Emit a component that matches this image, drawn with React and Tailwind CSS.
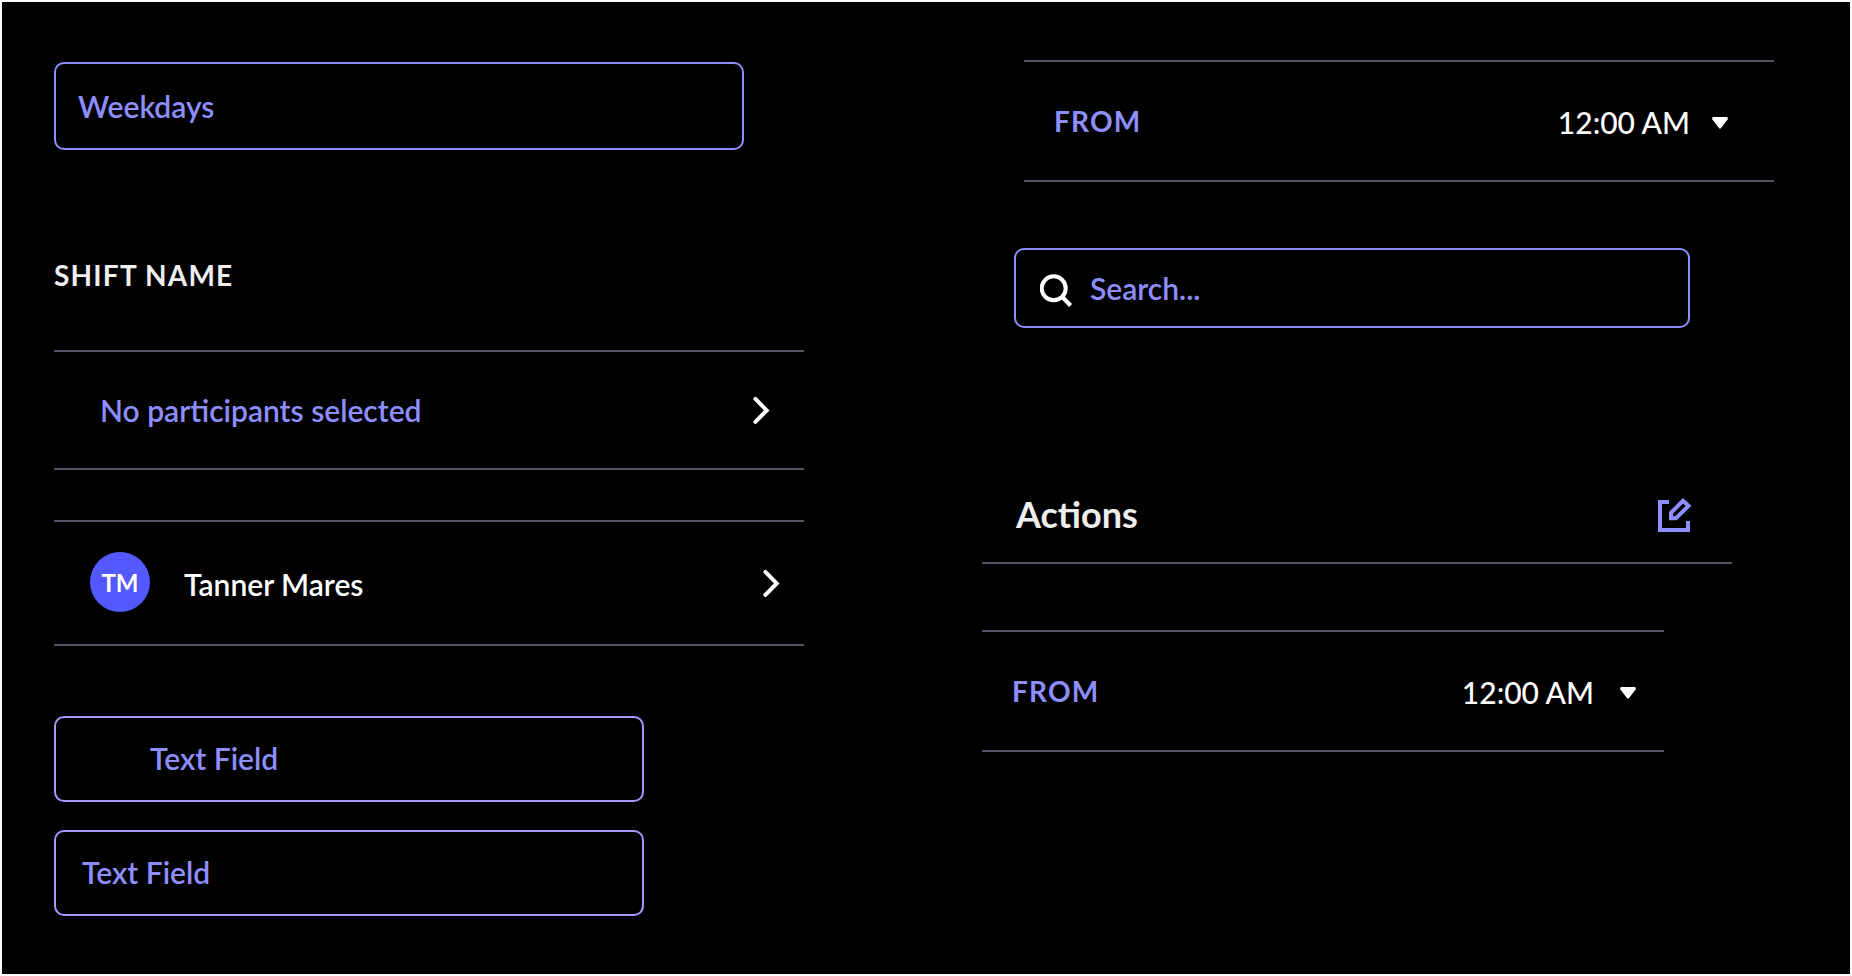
function Chevron() {
  return (
    <svg className="h-7 w-[18px] shrink-0" viewBox="0 0 18 28" fill="none">
      <path d="M2.4 2.9 L13.7 14.4 L2.4 25.9" stroke="#fff" strokeWidth="4" strokeLinecap="round" strokeLinejoin="miter" />
    </svg>
  );
}

function Caret() {
  return (
    <svg className="h-3 w-4 shrink-0" viewBox="0 0 16 12">
      <path d="M1.2 0 H14.8 Q16.4 0.6 15.6 2.4 L9.3 10.7 Q8 12.4 6.7 10.7 L0.4 2.4 Q-0.4 0.6 1.2 0 Z" fill="#fff" />
    </svg>
  );
}

function SearchIcon() {
  return (
    <svg className="h-[34px] w-[34px] shrink-0" viewBox="0 0 34 34" fill="none" stroke="#fff">
      <circle cx="13.7" cy="14.3" r="12" strokeWidth="4" />
      <path d="M22.3 23 L30.6 31.4" strokeWidth="4.2" />
    </svg>
  );
}

function EditIcon() {
  return (
    <svg className="size-[34px] shrink-0" viewBox="0 0 34 34" fill="none" stroke="#8E8EFF" strokeWidth="4">
      <path d="M11 4 H2 V32 H30 V23" />
      <path d="M25 2.8 L30.5 7.8 L17.9 20.3 H13 V14.8 Z" />
    </svg>
  );
}

function Field({ className, children }) {
  return (
    <div className={`flex items-center rounded-[10px] border-2 text-[30px] leading-9 font-semibold text-[#8E8EFF] ${className}`}>
      {children}
    </div>
  );
}

function Row({ className, children }) {
  return <div className={`flex items-center border-y-2 border-[#545466] ${className}`}>{children}</div>;
}

function TimeRow({ className, gap }) {
  return (
    <Row className={`h-[122px] justify-between ${className}`}>
      <span className="text-[28px] leading-[34px] font-bold tracking-[1.2px] text-[#8E8EFF]">FROM</span>
      <span className={`flex items-center text-[30px] leading-9 font-medium text-white ${gap}`}>
        <span className="pt-[2px]">12:00 AM</span>
        <span className="pt-1">
          <Caret />
        </span>
      </span>
    </Row>
  );
}

export default function App() {
  return (
    <div className="flex h-[976px] w-[1852px] overflow-hidden border-2 border-[#fbfbfb] bg-black font-['Lato',sans-serif]">
      <section className="flex w-[928px] flex-col items-start pt-[60px] pl-[52px]">
        <Field className="h-[88px] w-[690px] border-[#8E8EFF] pl-[22px]">Weekdays</Field>
        <h2 className="mt-[108px] text-[28px] leading-[34px] font-bold tracking-[1.2px] text-[#EEEEEE]">SHIFT NAME</h2>
        <Row className="mt-[58px] h-[120px] w-[750px] justify-between pr-[33px] pl-[46px]">
          <span className="text-[30px] leading-9 font-semibold text-[#8E8EFF]">No participants selected</span>
          <Chevron />
        </Row>
        <Row className="mt-[50px] h-[126px] w-[750px] pr-[23px] pl-9">
          <span className="mb-[2px] flex size-[60px] items-center justify-center rounded-full bg-[#5458FF] pt-[2px] text-2xl leading-7 font-bold text-white">
            TM
          </span>
          <span className="ml-[34px] grow pt-[2px] text-[30px] leading-9 font-semibold text-white">Tanner Mares</span>
          <Chevron />
        </Row>
        <Field className="mt-[70px] h-[86px] w-[590px] border-[#A599FF] pb-[2px] pl-[94px]">Text Field</Field>
        <Field className="mt-7 h-[86px] w-[590px] border-[#A599FF] pb-[2px] pl-[26px]">Text Field</Field>
      </section>
      <section className="flex flex-col items-start pt-[58px] pl-[52px]">
        <TimeRow className="ml-[42px] w-[750px] pr-[46px] pl-[30px]" gap="gap-[22px]" />
        <Field className="mt-[66px] ml-8 h-[80px] w-[676px] gap-4 border-[#8E8EFF] pl-[24px]">
          <span className="pt-[5px]">
            <SearchIcon />
          </span>
          <span>Search...</span>
        </Field>
        <header className="mt-[148px] flex h-[88px] w-[750px] items-start justify-between border-b-2 border-[#545466] pt-4 pr-10 pl-[34px]">
          <h1 className="pt-px text-4xl leading-[43px] font-bold text-[#EEEEEE]">Actions</h1>
          <span className="pt-[6px]">
            <EditIcon />
          </span>
        </header>
        <TimeRow className="mt-[66px] w-[682px] pr-7 pl-[30px]" gap="gap-[26px]" />
      </section>
    </div>
  );
}
